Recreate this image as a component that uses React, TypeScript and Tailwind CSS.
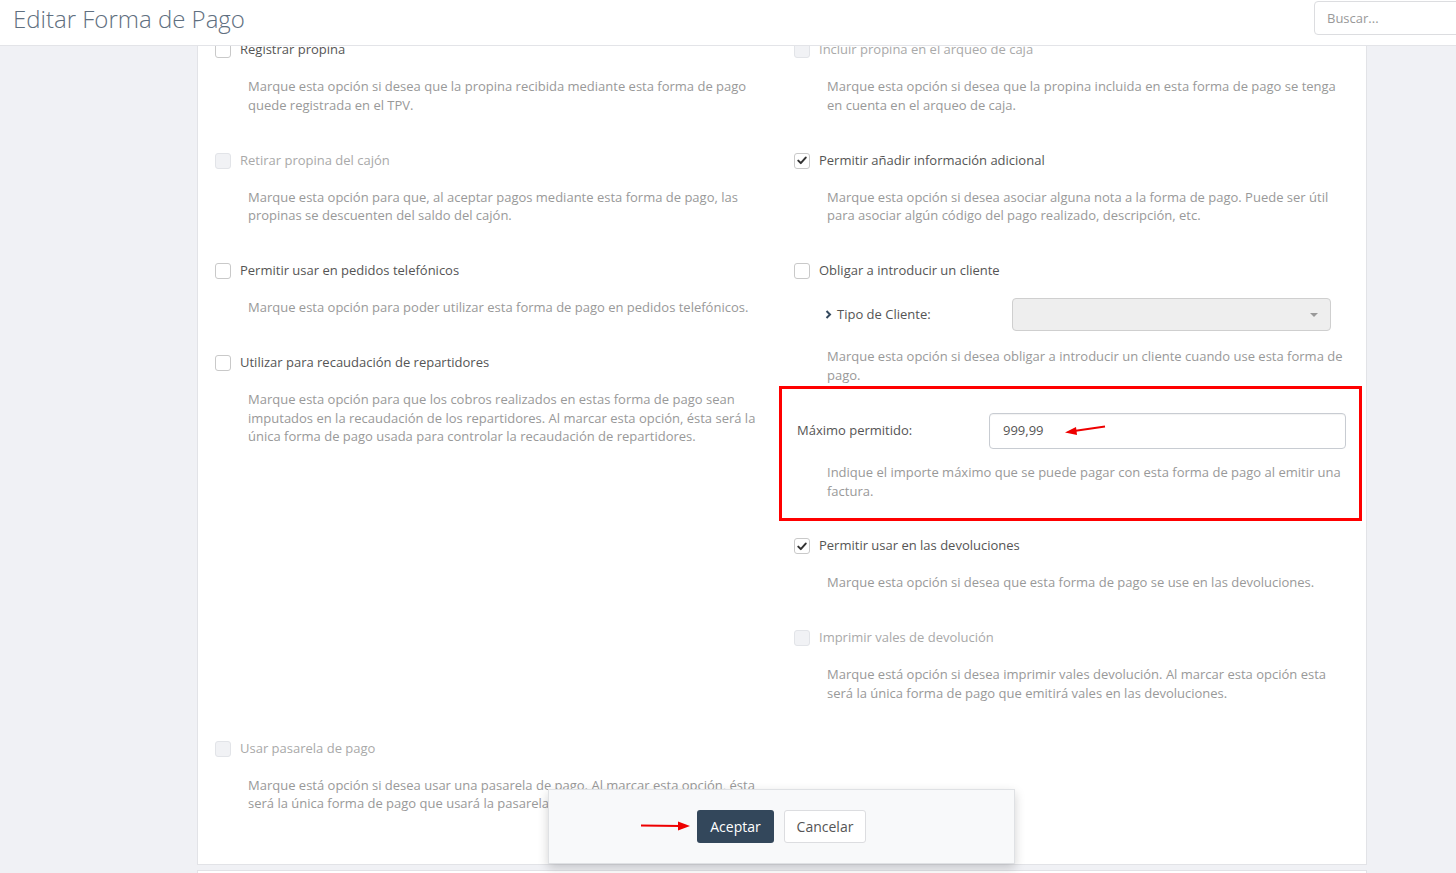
import React from "react";

const FONT = { fontFamily: '"Open Sans", "Noto Sans", Arial, sans-serif' };

function Checkbox({ checked, disabled }: { checked?: boolean; disabled?: boolean }) {
  return (
    <span
      className={
        "flex h-[16px] w-[16px] shrink-0 items-center justify-center rounded-[3px] border " +
        (disabled ? "border-[#e2e4e8] bg-[#f1f2f5]" : "border-[#c9c9c9] bg-white")
      }
    >
      {checked && (
        <svg width="10" height="9" viewBox="0 0 10 9">
          <path d="M1.3 4.6 L3.8 7.1 L8.7 1.6" fill="none" stroke="#333" strokeWidth="2" strokeLinecap="round" strokeLinejoin="round" />
        </svg>
      )}
    </span>
  );
}

function Label({ text, checked, disabled }: { text: string; checked?: boolean; disabled?: boolean }) {
  return (
    <div className="flex h-[22px] items-center">
      <Checkbox checked={checked} disabled={disabled} />
      <span className={"ml-[9px] text-[13px] " + (disabled ? "text-[#a9a9a9]" : "text-[#555]")}>{text}</span>
    </div>
  );
}

function Desc({ children, className = "" }: { children: React.ReactNode; className?: string }) {
  return <p className={"pl-[33px] text-[13px] leading-[18.5px] text-[#999] " + className}>{children}</p>;
}

function Item({
  label,
  desc,
  checked,
  disabled,
  last,
}: {
  label: string;
  desc: React.ReactNode;
  checked?: boolean;
  disabled?: boolean;
  last?: boolean;
}) {
  return (
    <div className={last ? "" : "mb-[35.5px]"}>
      <Label text={label} checked={checked} disabled={disabled} />
      <Desc className="mt-[16px]">{desc}</Desc>
    </div>
  );
}

export default function App() {
  return (
    <div className="relative h-[873px] w-[1456px] overflow-hidden bg-[#f0f1f5]" style={FONT}>
      {/* Header */}
      <header className="relative z-10 flex h-[46px] items-start border-b border-[#e3e4e8] bg-white">
        <h1 className="ml-[13px] mt-[3px] text-[24px] font-light leading-[32px] text-[#5f6f80]">Editar Forma de Pago</h1>
        <input
          readOnly
          placeholder="Buscar..."
          className="ml-auto mr-[-30px] mt-[1px] h-[34px] w-[172px] rounded-[4px] border border-[#dcdde0] bg-white px-[12px] text-[13px] text-[#555] placeholder:text-[#999] outline-none"
        />
      </header>

      {/* Content */}
      <div className="h-[827px] overflow-hidden">
        <div className="ml-[197px] w-[1170px] -mt-[31px] border border-[#e2e3e7] bg-white pl-[17px] pt-[23px] pb-[51px]">
          <div className="grid grid-cols-[554px_554px] gap-x-[25px]">
            {/* Left column */}
            <div>
              <Item
                label="Registrar propina"
                desc={<>Marque esta opción si desea que la propina recibida mediante esta forma de pago quede registrada en el TPV.</>}
              />
              <Item
                label="Retirar propina del cajón"
                disabled
                desc={<>Marque esta opción para que, al aceptar pagos mediante esta forma de pago, las propinas se descuenten del saldo del cajón.</>}
              />
              <Item
                label="Permitir usar en pedidos telefónicos"
                desc={<>Marque esta opción para poder utilizar esta forma de pago en pedidos telefónicos.</>}
              />
              <Item
                label="Utilizar para recaudación de repartidores"
                desc={
                  <>
                    Marque esta opción para que los cobros realizados en estas forma de pago sean imputados en la recaudación de
                    los repartidores. Al marcar esta opción, ésta será la única forma de pago usada para controlar la
                    recaudación de repartidores.
                  </>
                }
              />
            </div>

            {/* Right column */}
            <div>
              <Item
                label="Incluir propina en el arqueo de caja"
                disabled
                desc={<>Marque esta opción si desea que la propina incluida en esta forma de pago se tenga en cuenta en el arqueo de caja.</>}
              />
              <Item
                label="Permitir añadir información adicional"
                checked
                desc={
                  <>
                    Marque esta opción si desea asociar alguna nota a la forma de pago. Puede ser útil para asociar algún código
                    del pago realizado, descripción, etc.
                  </>
                }
              />
              <div>
                <Label text="Obligar a introducir un cliente" />
                <div className="mt-[16px] flex h-[33px] items-center pl-[31px]">
                  <div className="flex w-[187px] items-center text-[13px] text-[#555]">
                    <svg width="7" height="9" viewBox="0 0 7 9" className="mr-[5px]">
                      <path d="M1.5 1 L5 4.5 L1.5 8" fill="none" stroke="#34495e" strokeWidth="2" />
                    </svg>
                    Tipo de Cliente:
                  </div>
                  <div className="relative flex h-[33px] w-[319px] items-center justify-end rounded-[4px] border border-[#cfcfcf] bg-[#eeeeee] pr-[12px]">
                    <span className="h-0 w-0 border-x-[4px] border-t-[4px] border-x-transparent border-t-[#999]" />
                  </div>
                </div>
                <Desc className="mt-[16px]">
                  Marque esta opción si desea obligar a introducir un cliente cuando use esta forma de pago.
                </Desc>
              </div>

              {/* Highlighted box */}
              <div className="mt-[2px] -ml-[15px] -mr-[14px] border-[3px] border-[#ff0000] pt-[24px] pb-[18px]">
                <div className="flex items-center pl-[15px] pr-[13px]">
                  <div className="w-[192px] text-[13px] text-[#555]">Máximo permitido:</div>
                  <div className="flex h-[36px] flex-1 items-center rounded-[4px] border border-[#c8ccd2] bg-white px-[13px] text-[13px] text-[#555] shadow-[inset_0_1px_1px_rgba(0,0,0,0.05)]">
                    999,99
                  </div>
                </div>
                <p className="mt-[14px] pl-[45px] pr-[14px] text-[13px] leading-[18.5px] text-[#999]">
                  Indique el importe máximo que se puede pagar con esta forma de pago al emitir una factura.
                </p>
              </div>

              <div className="mt-[14px]">
                <Item
                  label="Permitir usar en las devoluciones"
                  checked
                  desc={<>Marque esta opción si desea que esta forma de pago se use en las devoluciones.</>}
                />
                <Item
                  label="Imprimir vales de devolución"
                  disabled
                  desc={
                    <>
                      Marque está opción si desea imprimir vales devolución. Al marcar esta opción esta será la única forma de
                      pago que emitirá vales en las devoluciones.
                    </>
                  }
                />
              </div>
            </div>

            {/* Row B */}
            <div>
              <Item
                label="Usar pasarela de pago"
                disabled
                last
                desc={
                  <>
                    Marque está opción si desea usar una pasarela de pago. Al marcar esta opción, ésta será la única forma de
                    pago que usará la pasarela de pago.
                  </>
                }
              />
            </div>
          </div>
        </div>
        <div className="ml-[197px] mt-[5px] h-[40px] w-[1170px] border border-[#e2e3e7] bg-white" />
      </div>

      {/* Arrow near input */}
      <svg className="absolute left-[1060px] top-[419px]" width="52" height="20" viewBox="0 0 52 20">
        <line x1="45" y1="7.5" x2="14" y2="12" stroke="#ee0000" strokeWidth="2" />
        <polygon points="5,13.5 16,8 17,16" fill="#ee0000" />
      </svg>

      {/* Floating footer */}
      <div className="absolute left-[548px] top-[789px] flex h-[75px] w-[467px] items-center justify-center gap-[10px] border border-[#dfe1e4] bg-[#f8f9fa] shadow-[0_4px_10px_rgba(0,0,0,0.18)]">
        <button className="h-[33px] w-[77px] rounded-[3px] bg-[#33475b] text-[14px] text-white">Aceptar</button>
        <button className="h-[33px] w-[82px] rounded-[3px] border border-[#dcdde0] bg-white text-[14px] text-[#555]">Cancelar</button>
      </div>

      {/* Arrow near Aceptar */}
      <svg className="absolute left-[638px] top-[818px]" width="56" height="16" viewBox="0 0 56 16">
        <line x1="3" y1="7.5" x2="42" y2="8" stroke="#ee0000" strokeWidth="2" />
        <polygon points="52,8 40,3.5 40,12.5" fill="#ee0000" />
      </svg>
    </div>
  );
}
